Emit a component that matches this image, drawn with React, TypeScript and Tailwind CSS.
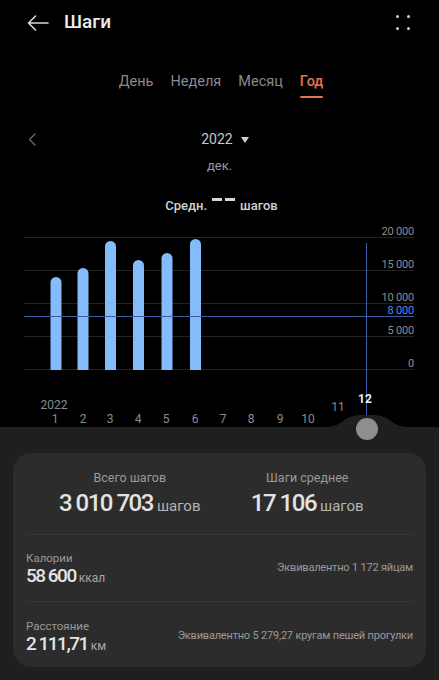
import React from "react";

const bars = [
  { x: 56, top: 277 },
  { x: 83, top: 268 },
  { x: 110.5, top: 241 },
  { x: 138.5, top: 260 },
  { x: 167, top: 253 },
  { x: 195.5, top: 239 },
];

const grid = [
  { y: 237, label: "20 000" },
  { y: 270, label: "15 000" },
  { y: 303, label: "10 000" },
  { y: 336, label: "5 000" },
  { y: 369, label: "0" },
];

const months = [55, 83, 110, 138, 166, 195, 223, 251, 280, 308];

// chart svg starts at page y = 216
const OFF = 216;

function StepsChart() {
  return (
    <div className="relative h-[211px] w-full">
      <svg width="439" height="211" className="block">
        {grid.map((g) => (
          <g key={g.label}>
            <line x1="24" x2="414" y1={g.y - OFF + 0.5} y2={g.y - OFF + 0.5} stroke="#222" strokeWidth="1" />
            <text
              x="414"
              y={g.y - OFF - 2}
              textAnchor="end"
              fill="#8c8c8c"
              fontSize="11"
              letterSpacing="-0.2"
              fontFamily="Roboto, sans-serif"
            >
              {g.label}
            </text>
          </g>
        ))}
        {bars.map((b, i) => (
          <rect
            key={i}
            x={b.x - 5.5}
            y={b.top - OFF}
            width="11"
            height={369 - b.top + 6}
            rx="5.5"
            fill="#84bbfb"
          />
        ))}
        <rect x="0" y={369 - OFF + 1} width="439" height="8" fill="#000" />
        <line x1="24" x2="414" y1={316 - OFF + 0.5} y2={316 - OFF + 0.5} stroke="#3a5fa8" strokeWidth="1" />
        <text x="414" y={316 - OFF - 2} textAnchor="end" fill="#4b8ef2" fontSize="11" letterSpacing="-0.2" fontFamily="Roboto, sans-serif">
          8 000
        </text>
        <line x1="366.5" x2="366.5" y1={243 - OFF} y2={422 - OFF} stroke="#3a5fa8" strokeWidth="1" />
        <text x="54" y={193} textAnchor="middle" fill="#8c8c8c" fontSize="12" fontFamily="Roboto, sans-serif">
          2022
        </text>
        {months.map((x, i) => (
          <text key={i} x={x} y={207} textAnchor="middle" fill="#8c8c8c" fontSize="12" fontFamily="Roboto, sans-serif">
            {i + 1}
          </text>
        ))}
        <text x="338" y={195} textAnchor="middle" fill="#8c8c8c" fontSize="12" fontFamily="Roboto, sans-serif">
          11
        </text>
        <text x="365" y={187} textAnchor="middle" fill="#f0f0f0" fontSize="12" fontWeight="700" fontFamily="Roboto, sans-serif">
          12
        </text>
      </svg>
    </div>
  );
}

function StatRow({
  label,
  value,
  unit,
  note,
}: {
  label: string;
  value: string;
  unit: string;
  note: string;
}) {
  return (
    <div className="flex items-center justify-between px-[13px]">
      <div className="flex flex-col">
        <span className="text-[11.5px] leading-[16px] text-[#9a9a9a]">{label}</span>
        <div className="flex h-[20px] items-baseline gap-[3px]">
          <span className="text-[19px] leading-[20px] font-medium tracking-[-1.5px] text-[#e4e4e4]">{value}</span>
          <span className="text-[12px] leading-[20px] text-[#a8a8a8]">{unit}</span>
        </div>
      </div>
      <span className="text-[11px] leading-[16px] tracking-[-0.2px] text-[#9a9a9a]">{note}</span>
    </div>
  );
}

export default function App() {
  const tabs = ["День", "Неделя", "Месяц", "Год"];

  return (
    <div className="flex h-[680px] w-[439px] flex-col overflow-hidden bg-black font-['Roboto',sans-serif]">
      {/* header */}
      <div className="flex h-[44px] items-center justify-between pl-[27px] pr-[29px] pt-[1px]">
        <div className="flex items-center gap-[15px]">
          <svg width="22" height="16" viewBox="0 0 22 16" fill="none">
            <path d="M21 8H1.5M8.5 1L1.5 8l7 7" stroke="#d8d8d8" strokeWidth="1.6" strokeLinecap="round" strokeLinejoin="round" />
          </svg>
          <span className="text-[19px] font-medium text-[#ececec]">Шаги</span>
        </div>
        <div className="grid grid-cols-2 gap-x-[8px] gap-y-[9px]">
          <span className="h-[3px] w-[3px] rounded-full bg-[#d0d0d0]" />
          <span className="h-[3px] w-[3px] rounded-full bg-[#d0d0d0]" />
          <span className="h-[3px] w-[3px] rounded-full bg-[#d0d0d0]" />
          <span className="h-[3px] w-[3px] rounded-full bg-[#d0d0d0]" />
        </div>
      </div>

      {/* tabs */}
      <div className="mt-[28px] flex justify-center gap-[17px] pl-[3px]">
        {tabs.map((t) => {
          const active = t === "Год";
          return (
            <div key={t} className="flex flex-col items-center">
              <span
                className={[
                  "text-[14.5px] leading-[20px]",
                  active ? "font-medium text-[#e5744b]" : "text-[#8a8a8a]",
                ].join(" ")}
              >
                {t}
              </span>
              <span className={["mt-[4px] h-[2px] w-full rounded-full", active ? "bg-[#e5744b]" : "bg-transparent"].join(" ")} />
            </div>
          );
        })}
      </div>

      {/* year selector */}
      <div className="mt-[31px] grid h-[20px] grid-cols-[1fr_auto_1fr] items-center px-[28px]">
        <svg width="8" height="13" viewBox="0 0 8 13" fill="none">
          <path d="M7 1L1.5 6.5 7 12" stroke="#6a6a6a" strokeWidth="1.4" strokeLinecap="round" strokeLinejoin="round" />
        </svg>
        <div className="flex items-center gap-[8px] pl-[11px]">
          <span className="text-[14px] text-[#c8c8c8]">2022</span>
          <svg width="8" height="6" viewBox="0 0 8 6">
            <path d="M0 0h8L4 6z" fill="#cfcfcf" />
          </svg>
        </div>
        <span />
      </div>

      <div className="mt-[8px] text-center text-[13px] leading-[18px] text-[#9a9a9a]">дек.</div>

      <div className="mt-[21px] flex h-[20px] items-center justify-center gap-[5px] pl-[4px]">
        <span className="text-[13px] font-medium text-[#d0d0d0]">Средн.</span>
        <div className="mb-[14px] flex gap-[3px]">
          <span className="h-[3px] w-[10px] bg-[#d6d6d6]" />
          <span className="h-[3px] w-[10px] bg-[#d6d6d6]" />
        </div>
        <span className="text-[13px] font-medium text-[#d0d0d0]">шагов</span>
      </div>

      <StepsChart />

      {/* bottom sheet */}
      <div className="relative flex-1 bg-[#1f1f1f]">
        <svg width="100" height="26" viewBox="0 0 100 26" className="absolute left-[317px] top-[-12px]">
          <path d="M0 12 C14 12 18 12 26 6 C34 0 40 0 50 0 C60 0 66 0 74 6 C82 12 86 12 100 12 V26 H0 Z" fill="#1f1f1f" />
          <circle cx="50" cy="14" r="11" fill="#8e8e8e" />
        </svg>

        <div className="mx-[13px] mt-[26px] flex h-[214px] flex-col rounded-[18px] bg-[#2c2c2c]">
          <div className="grid grid-cols-2 pl-[28px] pr-[30px] pt-[16px]">
            <div className="flex flex-col items-center">
              <span className="text-[12.5px] leading-[18px] text-[#9a9a9a]">Всего шагов</span>
              <div className="mt-[1px] flex h-[30px] items-baseline gap-[4px]">
                <span className="text-[24px] leading-[30px] font-medium tracking-[-1.5px] text-[#e2e2e2]">3 010 703</span>
                <span className="text-[15px] leading-[30px] text-[#b4b4b4]">шагов</span>
              </div>
            </div>
            <div className="flex flex-col items-center">
              <span className="text-[12.5px] leading-[18px] text-[#9a9a9a]">Шаги среднее</span>
              <div className="mt-[1px] flex h-[30px] items-baseline gap-[4px]">
                <span className="text-[24px] leading-[30px] font-medium tracking-[-1.5px] text-[#e2e2e2]">17 106</span>
                <span className="text-[15px] leading-[30px] text-[#b4b4b4]">шагов</span>
              </div>
            </div>
          </div>

          <div className="mx-[14px] mt-[16px] h-px bg-[#383838]" />

          <div className="pt-[15px]">
            <StatRow label="Калории" value="58 600" unit="ккал" note="Эквивалентно 1 172 яйцам" />
          </div>

          <div className="mx-[14px] mt-[15px] h-px bg-[#383838]" />

          <div className="pt-[16px]">
            <StatRow
              label="Расстояние"
              value="2 111,71"
              unit="км"
              note="Эквивалентно 5 279,27 кругам пешей прогулки"
            />
          </div>
        </div>
      </div>
    </div>
  );
}
